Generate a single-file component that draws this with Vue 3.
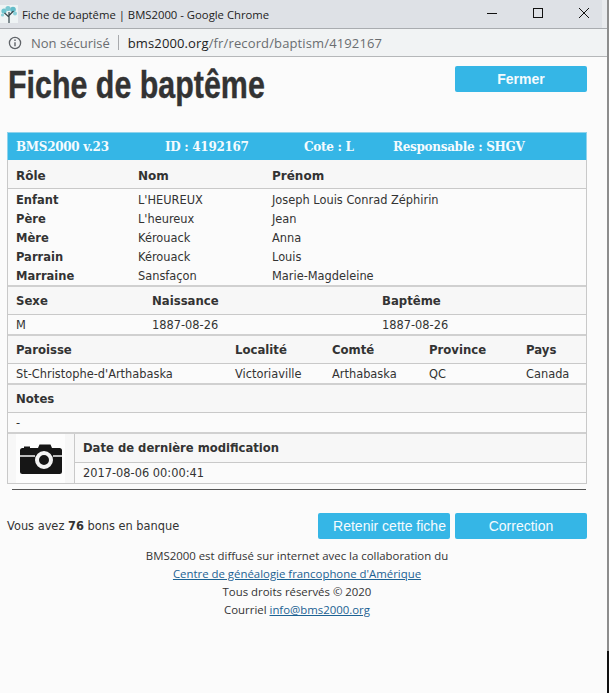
<script setup>
const roles = [
  ['Enfant', "L'HEUREUX", 'Joseph Louis Conrad Zéphirin'],
  ['Père', "L'heureux", 'Jean'],
  ['Mère', 'Kérouack', 'Anna'],
  ['Parrain', 'Kérouack', 'Louis'],
  ['Marraine', 'Sansfaçon', 'Marie-Magdeleine'],
]
</script>

<template>
  <div class="window">
    <div class="content">
      <div class="titlebar">
        <svg class="favicon" viewBox="0 0 18 18" width="18" height="18">
          <rect width="18" height="18" fill="#eef3f4" />
          <circle cx="4" cy="6" r="2.6" fill="#6fc4cf" />
          <circle cx="8" cy="3.500" r="2.6" fill="#7cc9d3" />
          <circle cx="13" cy="4.500" r="2.800" fill="#63bcc9" />
          <circle cx="15" cy="8.500" r="2" fill="#8ad0d9" />
          <circle cx="2.500" cy="10" r="1.600" fill="#8ad0d9" />
          <path d="M9 18V7M9 12 4.500 8M9 10.500l4.500-4.500" stroke="#34464b" stroke-width="1.200" fill="none" />
        </svg>
        <span class="title">Fiche de baptême | BMS2000 - Google Chrome</span>
        <svg class="controls" viewBox="0 0 120 14" width="120" height="14">
          <path d="M0 7.500h10" stroke="#111" fill="none" />
          <rect x="46.500" y="2.500" width="9" height="9" stroke="#111" fill="none" />
          <path d="M92 2l10 10M102 2 92 12" stroke="#111" fill="none" />
        </svg>
      </div>
      <div class="addressbar">
        <svg class="info" viewBox="0 0 14 14" width="14" height="14">
          <circle cx="7" cy="7" r="5.600" stroke="#5f6368" stroke-width="1.300" fill="none" />
          <path d="M7 6.200v4M7 3.600v1.400" stroke="#5f6368" stroke-width="1.400" fill="none" />
        </svg>
        <span class="insecure">Non sécurisé</span>
        <span class="sep"></span>
        <span class="url"><b>bms2000.org</b>/fr/record/baptism/4192167</span>
      </div>

      <main class="page">
        <div class="head">
          <h1>Fiche de baptême</h1>
          <a class="btn strong">Fermer</a>
        </div>

        <section class="card">
          <div class="banner">
            <span>BMS2000 v.23</span>
            <span>ID : 4192167</span>
            <span>Cote : L</span>
            <span>Responsable : SHGV</span>
          </div>

          <div class="row roles th first">
            <b>Rôle</b><b>Nom</b><b>Prénom</b>
          </div>
          <div class="people">
            <div v-for="r in roles" :key="r[0]" class="row roles person">
              <b>{{ r[0] }}</b><span>{{ r[1] }}</span><span>{{ r[2] }}</span>
            </div>
          </div>

          <div class="row sexe th top">
            <b>Sexe</b><b>Naissance</b><b>Baptême</b>
          </div>
          <div class="row sexe td">
            <span>M</span><span>1887-08-26</span><span>1887-08-26</span>
          </div>

          <div class="row place th top">
            <b>Paroisse</b><b>Localité</b><b>Comté</b><b>Province</b><b>Pays</b>
          </div>
          <div class="row place td">
            <span>St-Christophe-d'Arthabaska</span><span>Victoriaville</span><span>Arthabaska</span><span>QC</span><span>Canada</span>
          </div>

          <div class="row th top single"><b>Notes</b></div>
          <div class="row td single"><span>-</span></div>

          <div class="modif top">
            <div class="photo">
              <div class="photo-inner">
                <svg viewBox="0 0 42 30" width="42" height="30">
                  <path fill="#161616" d="M2.500 4H4V2.500h6V4h8l1.500-3.500h11L32 4h7.500A2.500 2.500 0 0 1 42 6.500v21a2.500 2.500 0 0 1-2.500 2.500h-37A2.500 2.500 0 0 1 0 27.500v-21A2.500 2.500 0 0 1 2.500 4z" />
                  <path d="M0 12h15M33 12h9" stroke="#f4f4f4" stroke-width="1.500" />
                  <circle cx="24" cy="16" r="7" fill="#161616" stroke="#f4f4f4" stroke-width="4" />
                </svg>
              </div>
            </div>
            <div class="modif-body">
              <div class="modif-title"><b>Date de dernière modification</b></div>
              <div class="modif-date">2017-08-06 00:00:41</div>
            </div>
          </div>
        </section>

        <hr class="rule" />

        <div class="actions">
          <span class="bank">Vous avez <b>76</b> bons en banque</span>
          <div class="buttons">
            <a class="btn offset">Retenir cette fiche</a>
            <a class="btn">Correction</a>
          </div>
        </div>

        <footer class="foot">
          <div>BMS2000 est diffusé sur internet avec la collaboration du</div>
          <div><a>Centre de généalogie francophone d'Amérique</a></div>
          <div>Tous droits réservés © 2020</div>
          <div>Courriel <a>info@bms2000.org</a></div>
        </footer>
      </main>
    </div>
    <div class="edge"></div>
  </div>
</template>

<style>
html, body { margin: 0; background: #fafafa; }
</style>

<style scoped>
.window {
  width: 609px;
  height: 693px;
  overflow: hidden;
  display: flex;
  background: #fbfbfb;
  color: #333;
  font-family: "DejaVu Sans", sans-serif;
  font-size: 11.4px;
}
.content { flex: 1; min-width: 0; }
.edge {
  width: 2px;
  background: linear-gradient(to bottom, #8d8d8d 0, #8d8d8d 651px, #111 651px);
}
.titlebar {
  height: 28px;
  background: linear-gradient(to right, #dee1e6 602px, #e8eaed 602px);
  border-bottom: 1px solid #a9acb0;
  display: flex;
  align-items: center;
  padding-left: 0;
  font-family: "Open Sans", sans-serif;
  font-size: 11.3px;
  color: #222;
}
.favicon { margin-right: 4px; }
.title { flex: 1; }
.controls { margin-top: -2px; }
.addressbar {
  height: 27px;
  background: #f1f3f4;
  border-bottom: 1px solid #b5b7b9;
  display: flex;
  align-items: center;
  padding-left: 8px;
  font-family: "Open Sans", sans-serif;
  font-size: 13px;
  color: #6a6d70;
}
.info { margin-right: 9px; }
.sep { width: 1px; height: 15px; background: #a8aaad; margin: 0 9px 0 8px; }
.url { letter-spacing: 0.13px; }
.url b { font-weight: 400; color: #222; }
.page { padding: 0 20px 0 7px; }
.head {
  height: 75px;
  display: flex;
  justify-content: space-between;
  align-items: flex-start;
}
h1 {
  margin: 5px 0 0 1px;
  font-family: "Liberation Sans", sans-serif;
  font-size: 38px;
  line-height: 46px;
  font-weight: 700;
  color: #333;
  transform: scaleX(0.8);
  transform-origin: left center;
  -webkit-text-stroke: 0.4px #333;
}
.btn {
  box-sizing: border-box;
  width: 132px;
  height: 26px;
  background: #35b6e6;
  border-radius: 2px;
  color: #f4fbfe;
  display: flex;
  align-items: center;
  justify-content: center;
  font-family: "Liberation Sans", sans-serif;
  font-size: 14px;
}
.head .btn { margin-top: 9px; }
.strong { font-weight: 700; }
.offset { padding-left: 11px; }
.card { border: 1px solid #c9c9c9; border-top: 0; }
.banner {
  height: 27px;
  background: #35b6e6;
  border: 1px solid #8fd3ec;
  border-bottom: 0;
  margin: 0 -1px;
  color: #f4fbfe;
  font-family: "DejaVu Serif", serif;
  font-weight: 700;
  font-size: 12px;
  letter-spacing: -0.3px;
  display: grid;
  grid-template-columns: 149px 139px 89px 1fr;
  align-items: center;
  padding-left: 8px;
}
.row { display: grid; padding-left: 8px; align-items: center; }
.th { height: 27px; background: #f7f7f7; border-bottom: 1px solid #c9c9c9; font-size: 11.7px; }
.th.first { height: 25px; padding-top: 3px; font-size: 12px; }
.people { padding-top: 1px; }
.td { height: 19px; }
.top { border-top: 2px solid #d0d0d0; }
.roles { grid-template-columns: 122px 134px 1fr; }
.person { height: 19px; }
.person b { font-size: 11.5px; }
.sexe { grid-template-columns: 136px 230px 1fr; }
.place { grid-template-columns: 219px 97px 97px 97px 1fr; }
.modif { display: flex; height: 49px; }
.photo {
  width: 67px;
  border-right: 1px solid #c9c9c9;
  padding-left: 8px;
  box-sizing: border-box;
  background: #f7f7f7;
}
.photo-inner {
  width: 49px;
  height: 100%;
  background: #fdfdfd;
  padding-left: 4px;
  box-sizing: border-box;
  display: flex;
  align-items: center;
}
.modif-body { flex: 1; }
.modif-title {
  height: 28px;
  border-bottom: 1px solid #c9c9c9;
  background: #f7f7f7;
  padding-left: 8px;
  display: flex;
  align-items: center;
  font-size: 11.6px;
}
.modif-date { height: 20px; padding-left: 8px; display: flex; align-items: center; }
.rule { margin: 5px 1px 0 5px; border: 0; border-top: 1px solid #555; }
.actions {
  margin-top: 23px;
  display: flex;
  justify-content: space-between;
  align-items: center;
}
.buttons { display: flex; gap: 5px; }
.foot {
  margin-top: 8px;
  text-align: center;
  line-height: 18px;
  font-family: "Open Sans", sans-serif;
  font-size: 11.4px;
}
.foot a { color: #1c6293; text-decoration: underline; }
</style>
